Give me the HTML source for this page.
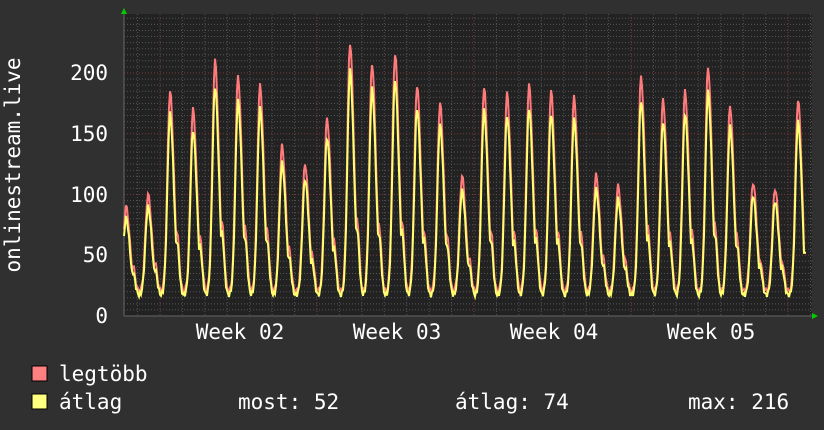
<!DOCTYPE html>
<html><head><meta charset="utf-8"><style>
body{margin:0;background:#303030;width:824px;height:430px;overflow:hidden}
svg{display:block}
text{font-family:"DejaVu Sans Mono","Liberation Mono",monospace;fill:#fff;font-size:21px}
</style></head><body>
<svg id="s" width="824" height="430" xmlns="http://www.w3.org/2000/svg">
<rect x="0" y="0" width="824" height="430" fill="#303030"/>
<rect x="124" y="14" width="688" height="302" fill="#222"/>
<g id="grid"></g>
<polyline id="red" fill="none" stroke="#ff7a7a" stroke-width="2"/>
<polyline id="yel" fill="none" stroke="#ffff70" stroke-width="2"/>
<polygon points="121,14 127,14 124,8" fill="#0c0"/>
<polygon points="812,313 812,319 818,316" fill="#0c0"/>
<text x="108" y="323" text-anchor="end">0</text>
<text x="108" y="262" text-anchor="end">50</text>
<text x="108" y="202" text-anchor="end">100</text>
<text x="108" y="141" text-anchor="end">150</text>
<text x="108" y="80" text-anchor="end">200</text>
<text transform="translate(20,165) rotate(-90)" text-anchor="middle">onlinestream.live</text>
<g style="font-size:22px">
<text x="240" y="339" text-anchor="middle">Week 02</text>
<text x="397" y="339" text-anchor="middle">Week 03</text>
<text x="554" y="339" text-anchor="middle">Week 04</text>
<text x="711" y="339" text-anchor="middle">Week 05</text>
</g>
<rect x="32" y="366" width="15" height="15" fill="#ff8080" stroke="#000"/>
<rect x="32" y="394" width="15" height="15" fill="#ffff80" stroke="#000"/>
<text x="59" y="381">legtöbb</text>
<text x="59" y="409">átlag</text>
<text x="238" y="409">most: 52</text>
<text x="455" y="409">átlag: 74</text>
<text x="688" y="409">max: 216</text>
</svg>
<script>
var g=document.getElementById('grid'),h='';
function Y(v){return 316-v*1.215}
for(var v=5;v<=245;v+=5){var y=Y(v).toFixed(1);var maj=v%50==0;
h+='<line x1="124" x2="812" y1="'+y+'" y2="'+y+'" stroke="'+(maj?'#7a3a3a':'#555')+'" stroke-dasharray="1,2"/>';}
for(var i=0;i<32;i++){var x=(160+(i-1)*22.43).toFixed(1);if(x<124||x>812)continue;var maj=(i-1)%7==0;
h+='<line y1="14" y2="316" x1="'+x+'" x2="'+x+'" stroke="'+(maj?'#7a3a3a':'#555')+'" stroke-dasharray="1,2"/>';}
h+='<line x1="124" x2="812" y1="316" y2="316" stroke="#666"/><line x1="124" x2="124" y1="14" y2="316" stroke="#666"/>';
g.innerHTML=h;
var px=[126,148,170,193,215,238,260,282,305,327,350,372,395,417,440,462,484,507,529,551,574,596,618,641,663,685,708,730,753,775,798];
var pk=[90,100,185,170,210,197,190,140,125,163,225,208,216,190,175,115,188,183,190,185,180,116,107,197,178,185,205,173,110,105,178];
var r=[],yl=[];
for(var x=124;x<=806;x++){var m=20,my=17;
for(var k=0;k<px.length;k++){var d=x-px[k];var w=d<0?2.6:3.8;var e=Math.exp(-d*d/(2*w*w));
var s=Math.exp(-Math.pow((x-px[k]-7)/3,2))*0.3;
var f=Math.max(e,s);
m=Math.max(m,20+(pk[k]-20)*f);my=Math.max(my,17+(pk[k]*0.9-17)*f);}
m+=Math.sin(x*1.7)*2;my+=Math.sin(x*2.3)*2;
if(x>=804){m=my=52;}
r.push(x+','+Y(m).toFixed(1));yl.push(x+','+Y(my).toFixed(1));}
document.getElementById('red').setAttribute('points',r.join(' '));
document.getElementById('yel').setAttribute('points',yl.join(' '));
</script>
</body></html>
